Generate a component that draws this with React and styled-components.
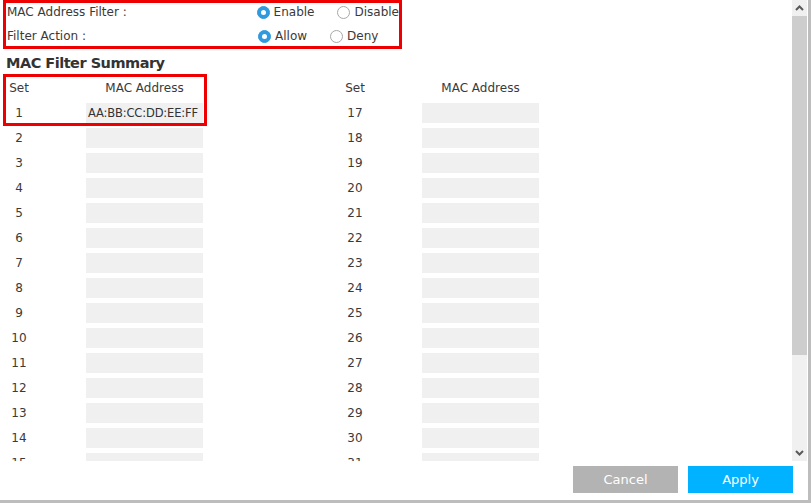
import React from 'react';
import styled, {createGlobalStyle} from 'styled-components';

const GlobalStyle = createGlobalStyle`
    html, body {
        margin: 0;
        padding: 0;
        background: #fff;
    }
    body {
        font-family: "DejaVu Sans", "Liberation Sans", sans-serif;
        font-size: 12px;
        color: #3a3a3a;
    }
`

const Dialog = styled.div`
    width: 808px;
    height: 500px;
    display: flex;
    flex-direction: column;
    border-right: 3px solid #bdbdbd;
    border-bottom: 3px solid #bdbdbd;
    background: #fff;
`

const Body = styled.div`
    height: 461px;
    display: flex;
`

const Content = styled.div`
    position: relative;
    flex: 1;
    overflow: hidden;
`

const SettingsBox = styled.div`
    margin-left: 3px;
    width: 393px;
    height: 43px;
    border: 3px solid #ee0000;
    display: flex;
    flex-direction: column;
    gap: 6px;
`

const SettingRow = styled.div`
    height: 18px;
    display: flex;
    align-items: center;
    padding-left: 1px;
`

const Label = styled.div`
    width: 251px;
`

const Options = styled.div`
    display: flex;
    align-items: center;
    gap: 23px;
`

const Option = styled.label`
    display: flex;
    align-items: center;
    gap: 4px;
`

const Radio = styled.span`
    width: 13px;
    height: 13px;
    box-sizing: border-box;
    border-radius: 50%;
    display: inline-flex;
    align-items: center;
    justify-content: center;
    background: ${({checked}) => checked ? '#2f9ade' : '#fff'};
    border: 1px solid ${({checked}) => checked ? '#2f9ade' : '#a8a8a8'};
    &::after {
        content: '';
        width: 5px;
        height: 5px;
        border-radius: 50%;
        background: #fff;
        display: ${({checked}) => checked ? 'block' : 'none'};
    }
`

const Heading = styled.h2`
    margin: 2px 0 0 6px;
    height: 24px;
    line-height: 24px;
    font-size: 14.5px;
    font-weight: bold;
    color: #333;
    letter-spacing: -0.5px;
`

const Table = styled.div`
    margin-top: 3px;
    display: grid;
    grid-template-columns: 336px 336px;
`

const Column = styled.div`
    display: flex;
    flex-direction: column;
    gap: 5px;
`

const Row = styled.div`
    height: 20px;
    display: flex;
    align-items: center;
`

const SetCell = styled.div`
    width: 38px;
    text-align: center;
    margin-right: 48px;
`

const MacHeader = styled.div`
    width: 117px;
    text-align: center;
`

const MacInput = styled.div`
    width: 117px;
    height: 20px;
    line-height: 20px;
    background: #f0f0f0;
    box-sizing: border-box;
    padding-left: 2px;
    font-size: 11.5px;
    letter-spacing: -0.15px;
    color: #333;
    white-space: nowrap;
    overflow: hidden;
`

const Highlight = styled.div`
    position: absolute;
    left: 3px;
    top: 74px;
    width: 198px;
    height: 46px;
    border: 3px solid #ee0000;
    pointer-events: none;
`

const ScrollBar = styled.div`
    width: 15px;
    height: 461px;
    background: #f0f0f0;
    display: flex;
    flex-direction: column;
    margin-right: 1px;
`

const ScrollButton = styled.div`
    height: 16px;
    display: flex;
    align-items: center;
    justify-content: center;
`

const Thumb = styled.div`
    height: 339px;
    background: #cdcdcd;
`

const Track = styled.div`
    flex: 1;
`

const Footer = styled.div`
    flex: 1;
    display: flex;
    justify-content: flex-end;
    align-items: flex-start;
    gap: 10px;
    padding: 5px 15px 0 0;
`

const Button = styled.button`
    width: 105px;
    height: 27px;
    border: none;
    font-family: "DejaVu Sans", sans-serif;
    font-size: 13px;
    color: #fff;
    background: ${({primary}) => primary ? '#00b2ff' : '#b3b3b3'};
    cursor: pointer;
`

const Chevron = ({up}) => (
    <svg width="9" height="6" viewBox="0 0 9 6">
        <path
            d={up ? 'M1 5 L4.5 1.5 L8 5' : 'M1 1 L4.5 4.5 L8 1'}
            fill="none"
            stroke="#5a5a5a"
            strokeWidth="2"
        />
    </svg>
)

const macs = {1: 'AA:BB:CC:DD:EE:FF'};

const TableColumn = ({from}) => {
    const rows = [];
    for(let i = from; i < from + 15; i++){
        rows.push(
            <Row key={i}>
                <SetCell>{i}</SetCell>
                <MacInput>{macs[i] || ''}</MacInput>
            </Row>
        );
    }
    return <Column>
        <Row>
            <SetCell>Set</SetCell>
            <MacHeader>MAC Address</MacHeader>
        </Row>
        {rows}
    </Column>
}

export default function App(){
    return <>
        <GlobalStyle />
        <Dialog>
            <Body>
                <Content>
                    <SettingsBox>
                        <SettingRow>
                            <Label>MAC Address Filter :</Label>
                            <Options>
                                <Option><Radio checked />Enable</Option>
                                <Option><Radio />Disable</Option>
                            </Options>
                        </SettingRow>
                        <SettingRow>
                            <Label>Filter Action :</Label>
                            <Options>
                                <Option><Radio checked />Allow</Option>
                                <Option><Radio />Deny</Option>
                            </Options>
                        </SettingRow>
                    </SettingsBox>
                    <Heading>MAC Filter Summary</Heading>
                    <Table>
                        <TableColumn from={1} />
                        <TableColumn from={17} />
                    </Table>
                    <Highlight />
                </Content>
                <ScrollBar>
                    <ScrollButton><Chevron up /></ScrollButton>
                    <Thumb />
                    <Track />
                    <ScrollButton><Chevron /></ScrollButton>
                </ScrollBar>
            </Body>
            <Footer>
                <Button>Cancel</Button>
                <Button primary>Apply</Button>
            </Footer>
        </Dialog>
    </>
}
